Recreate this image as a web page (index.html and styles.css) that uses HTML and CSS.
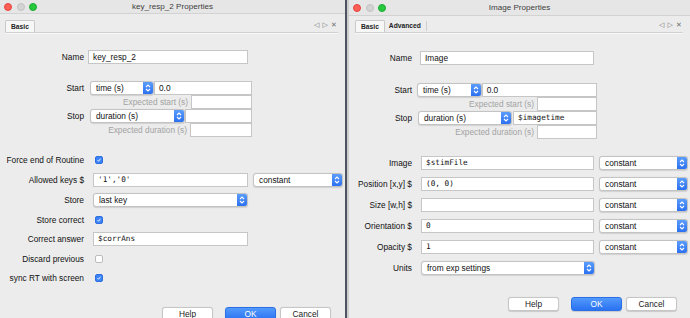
FILE: index.html
```html
<!DOCTYPE html>
<html lang="en">
<head>
  <meta charset="UTF-8">
  <title>Properties</title>
  <link rel="stylesheet" href="styles.css">
</head>
<body>
  <div class="desk">
    <!-- keyboard component dialog -->
    <section class="win win-left">
      <header class="titlebar">
        <span class="lights"><i class="dot red"></i><i class="dot off"></i><i class="dot green"></i></span>
        <span class="title">key_resp_2 Properties</span>
        <span></span>
      </header>
      <div class="tabs">
        <span class="tab active">Basic</span>
        <span class="tab-tools">◁ ▷ ✕</span>
      </div>
      <div class="body">
        <div class="row r-name">
          <label class="lbl">Name</label>
          <div class="field plain w-name">key_resp_2</div>
        </div>

        <div class="group g-time">
          <div class="row">
            <label class="lbl">Start</label>
            <div class="sel s-start"><span class="val">time (s)</span><span class="step"><svg width="10" height="12" viewBox="0 0 10 12"><polyline points="3,5 5,3 7,5"/><polyline points="3,7 5,9 7,7"/></svg></span></div>
            <div class="field plain w-startval">0.0</div>
          </div>
          <div class="row exp">
            <label class="lbl-exp">Expected start (s)</label>
            <div class="field w-exp1"></div>
          </div>
          <div class="row">
            <label class="lbl">Stop</label>
            <div class="sel s-stop"><span class="val">duration (s)</span><span class="step"><svg width="10" height="12" viewBox="0 0 10 12"><polyline points="3,5 5,3 7,5"/><polyline points="3,7 5,9 7,7"/></svg></span></div>
            <div class="field w-stopval"></div>
          </div>
          <div class="row exp">
            <label class="lbl-exp">Expected duration (s)</label>
            <div class="field w-exp2"></div>
          </div>
        </div>

        <div class="group g-opts">
          <div class="row">
            <label class="lbl">Force end of Routine</label>
            <span class="check on"><svg width="8" height="8" viewBox="0 0 8 8"><polyline points="2,4.2 3.4,5.7 6,2.3"/></svg></span>
          </div>
          <div class="row">
            <label class="lbl">Allowed keys $</label>
            <div class="field code w-wide">'1','0'</div>
            <div class="sel s-const"><span class="val">constant</span><span class="step"><svg width="10" height="12" viewBox="0 0 10 12"><polyline points="3,5 5,3 7,5"/><polyline points="3,7 5,9 7,7"/></svg></span></div>
          </div>
          <div class="row">
            <label class="lbl">Store</label>
            <div class="sel s-store"><span class="val">last key</span><span class="step"><svg width="10" height="12" viewBox="0 0 10 12"><polyline points="3,5 5,3 7,5"/><polyline points="3,7 5,9 7,7"/></svg></span></div>
          </div>
          <div class="row">
            <label class="lbl">Store correct</label>
            <span class="check on"><svg width="8" height="8" viewBox="0 0 8 8"><polyline points="2,4.2 3.4,5.7 6,2.3"/></svg></span>
          </div>
          <div class="row tight">
            <label class="lbl">Correct answer</label>
            <div class="field code w-wide">$corrAns</div>
          </div>
          <div class="row">
            <label class="lbl">Discard previous</label>
            <span class="check"></span>
          </div>
          <div class="row tight">
            <label class="lbl">sync RT with screen</label>
            <span class="check on"><svg width="8" height="8" viewBox="0 0 8 8"><polyline points="2,4.2 3.4,5.7 6,2.3"/></svg></span>
          </div>
        </div>

        <div class="buttons">
          <button class="btn">Help</button>
          <button class="btn ok">OK</button>
          <button class="btn">Cancel</button>
        </div>
      </div>
    </section>

    <div class="seam"></div>

    <!-- image component dialog -->
    <section class="win win-right">
      <header class="titlebar">
        <span class="lights"><i class="dot red"></i><i class="dot off"></i><i class="dot green"></i></span>
        <span class="title">Image Properties</span>
        <span></span>
      </header>
      <div class="tabs">
        <span class="tab active">Basic</span>
        <span class="tab">Advanced</span>
        <span class="tab-sep"></span>
        <span class="tab-tools">◁ ▷ ✕</span>
      </div>
      <div class="body">
        <div class="row r-name">
          <label class="lbl">Name</label>
          <div class="field plain w-name">Image</div>
        </div>

        <div class="group g-time">
          <div class="row">
            <label class="lbl">Start</label>
            <div class="sel s-start"><span class="val">time (s)</span><span class="step"><svg width="10" height="12" viewBox="0 0 10 12"><polyline points="3,5 5,3 7,5"/><polyline points="3,7 5,9 7,7"/></svg></span></div>
            <div class="field plain w-startval">0.0</div>
          </div>
          <div class="row exp">
            <label class="lbl-exp">Expected start (s)</label>
            <div class="field w-exp1"></div>
          </div>
          <div class="row">
            <label class="lbl">Stop</label>
            <div class="sel s-stop"><span class="val">duration (s)</span><span class="step"><svg width="10" height="12" viewBox="0 0 10 12"><polyline points="3,5 5,3 7,5"/><polyline points="3,7 5,9 7,7"/></svg></span></div>
            <div class="field code w-stopval">$imagetime</div>
          </div>
          <div class="row exp">
            <label class="lbl-exp">Expected duration (s)</label>
            <div class="field w-exp2"></div>
          </div>
        </div>

        <div class="group g-opts">
          <div class="row">
            <label class="lbl">Image</label>
            <div class="field code w-wide">$stimFile</div>
            <div class="sel s-const"><span class="val">constant</span><span class="step"><svg width="10" height="12" viewBox="0 0 10 12"><polyline points="3,5 5,3 7,5"/><polyline points="3,7 5,9 7,7"/></svg></span></div>
          </div>
          <div class="row">
            <label class="lbl">Position [x,y] $</label>
            <div class="field code w-wide">(0, 0)</div>
            <div class="sel s-const"><span class="val">constant</span><span class="step"><svg width="10" height="12" viewBox="0 0 10 12"><polyline points="3,5 5,3 7,5"/><polyline points="3,7 5,9 7,7"/></svg></span></div>
          </div>
          <div class="row">
            <label class="lbl">Size [w,h] $</label>
            <div class="field code w-wide"></div>
            <div class="sel s-const"><span class="val">constant</span><span class="step"><svg width="10" height="12" viewBox="0 0 10 12"><polyline points="3,5 5,3 7,5"/><polyline points="3,7 5,9 7,7"/></svg></span></div>
          </div>
          <div class="row">
            <label class="lbl">Orientation $</label>
            <div class="field code w-wide">0</div>
            <div class="sel s-const"><span class="val">constant</span><span class="step"><svg width="10" height="12" viewBox="0 0 10 12"><polyline points="3,5 5,3 7,5"/><polyline points="3,7 5,9 7,7"/></svg></span></div>
          </div>
          <div class="row">
            <label class="lbl">Opacity $</label>
            <div class="field code w-wide">1</div>
            <div class="sel s-const"><span class="val">constant</span><span class="step"><svg width="10" height="12" viewBox="0 0 10 12"><polyline points="3,5 5,3 7,5"/><polyline points="3,7 5,9 7,7"/></svg></span></div>
          </div>
          <div class="row">
            <label class="lbl">Units</label>
            <div class="sel s-store"><span class="val">from exp settings</span><span class="step"><svg width="10" height="12" viewBox="0 0 10 12"><polyline points="3,5 5,3 7,5"/><polyline points="3,7 5,9 7,7"/></svg></span></div>
          </div>
        </div>

        <div class="buttons">
          <button class="btn">Help</button>
          <button class="btn ok">OK</button>
          <button class="btn">Cancel</button>
        </div>
      </div>
    </section>
  </div>
</body>
</html>
```

FILE: styles.css
```css
* {
  margin: 0;
  padding: 0;
  box-sizing: border-box;
}

body {
  width: 690px;
  height: 318px;
  overflow: hidden;
  background: #ececec;
  font-family: "Liberation Sans", Arial, sans-serif;
  font-size: 8.3px;
  color: #111;
}

.desk {
  display: flex;
  height: 318px;
}

.win {
  flex: none;
  width: 345px;
  height: 318px;
  background: #ececec;
  overflow: hidden;
}

.seam {
  flex: none;
  width: 2px;
  background: #4d5361;
}

.win-right {
  width: 343px;
  border-left: 2px solid #cdcdcd;
}

/* title bar */
.titlebar {
  display: grid;
  grid-template-columns: 1fr auto 1fr;
  align-items: center;
  height: 14px;
  background: #e6e6e6;
  border-bottom: 1px solid #d2d2d2;
}

.win-right .titlebar {
  height: 16px;
}

.lights {
  display: flex;
  gap: 4.5px;
  padding-left: 4px;
}

.dot {
  width: 8px;
  height: 8px;
  border-radius: 50%;
}

.dot.red {
  background: #fd5e56;
  border: 0.5px solid #e2463f;
}

.dot.off {
  background: #d3d3d3;
  border: 0.5px solid #c2c2c2;
}

.dot.green {
  background: #27c93f;
  border: 0.5px solid #1daa2f;
}

.title {
  font-size: 8.1px;
  color: #404040;
}

/* tab strip */
.tabs {
  display: flex;
  align-items: flex-end;
  height: 19px;
  margin: 0 7px 0 5px;
  border-bottom: 1px solid #d0d0d0;
  box-shadow: 0 1px 0 #f8f8f8;
}

.win-right .tabs {
  height: 17px;
  margin-left: 6px;
}

.tab {
  height: 12px;
  padding: 0 4px;
  font-size: 6.7px;
  font-weight: bold;
  line-height: 12px;
  color: #222;
}

.tab.active {
  background: #f7f7f7;
  border: 1px solid #c9c9c9;
  border-bottom: none;
  border-radius: 2px 2px 0 0;
  padding: 0 5px;
  line-height: 11px;
}

.tab-sep {
  width: 1px;
  height: 10px;
  margin: 0 0 1px 1px;
  background: #cfcfcf;
}

.tab-tools {
  margin-left: auto;
  margin-right: 1px;
  padding-bottom: 3px;
  font-family: "DejaVu Sans", sans-serif;
  font-size: 7px;
  word-spacing: 1px;
  color: #6f6f6f;
}

/* form body */
.body {
  display: flex;
  flex-direction: column;
}

.row {
  display: flex;
  align-items: center;
  height: 14px;
  white-space: nowrap;
}

.lbl {
  flex: none;
  width: 84px;
  text-align: right;
}

.win-right .lbl {
  width: 63px;
}

.r-name {
  margin-top: 17px;
}

.win-right .r-name {
  margin-top: 18px;
}

.g-time {
  margin-top: 17px;
  width: 252px;
}

.win-right .g-time {
  margin-top: 18px;
  width: 248px;
}

.row.exp {
  justify-content: flex-end;
}

.lbl-exp {
  color: #a3a3a3;
  margin-right: 3px;
}

.g-opts {
  display: flex;
  flex-direction: column;
  gap: 6px;
  margin-top: 16px;
}

.win-left .row.tight {
  margin-top: -1px;
}

.win-right .g-opts {
  gap: 7px;
  margin-top: 17px;
}

/* text fields */
.field {
  height: 14px;
  background: #fff;
  border: 1px solid #c6c6c6;
  padding-left: 4px;
  line-height: 12px;
  font-family: "DejaVu Sans Mono", "Liberation Mono", monospace;
  font-size: 7.7px;
  color: #111;
}

.field.plain {
  font-family: "Liberation Sans", Arial, sans-serif;
  font-size: 8.3px;
}

.w-name {
  width: 160px;
  margin-left: 4px;
}

.win-right .w-name {
  width: 174px;
  margin-left: 8px;
}

.w-startval {
  width: 98px;
}

.win-right .w-startval {
  width: 116px;
}

.w-exp1 {
  width: 61px;
}

.w-exp2 {
  width: 62px;
}

.win-right .w-exp1,
.win-right .w-exp2 {
  width: 60px;
}

.w-stopval {
  width: 67px;
}

.win-right .w-stopval {
  width: 84px;
  margin-left: 1px;
}

.w-wide {
  width: 155px;
  margin-left: 9px;
}

.win-right .w-wide {
  width: 173px;
  margin-left: 9px;
}

/* pop-up menus */
.sel {
  display: flex;
  height: 14px;
  background: #fff;
  border: 1px solid #c3c3c3;
  border-radius: 3px;
  overflow: hidden;
  box-shadow: 0 0.5px 1px rgba(0, 0, 0, 0.12);
}

.sel .val {
  flex: 1;
  padding-left: 5px;
  line-height: 12px;
}

.step {
  flex: none;
  width: 10px;
  display: flex;
  align-items: center;
  justify-content: center;
  background: linear-gradient(#5b9dfb, #2b70f0);
}

.step polyline {
  fill: none;
  stroke: #fff;
  stroke-width: 1.1;
}

.s-start {
  width: 64px;
  margin-left: 6px;
}

.win-right .s-start {
  width: 65px;
  margin-left: 5px;
}

.s-stop {
  width: 95px;
  margin-left: 6px;
}

.win-right .s-stop {
  width: 94px;
}

.s-const {
  width: 90px;
  margin-left: 5px;
}

.win-right .s-const {
  width: 89px;
}

.s-store {
  width: 155px;
  margin-left: 9px;
}

.win-right .s-store {
  width: 174px;
}

/* checkboxes */
.check {
  display: flex;
  align-items: center;
  justify-content: center;
  width: 8px;
  height: 8px;
  margin-left: 11px;
  background: #fff;
  border: 1px solid #bdbdbd;
  border-radius: 2px;
}

.check.on {
  background: #3b83f7;
  border-color: #2f6fdf;
}

.check polyline {
  fill: none;
  stroke: #fff;
  stroke-width: 1.2;
}

/* dialog buttons */
.buttons {
  display: flex;
  margin-top: 22px;
  padding-left: 162px;
}

.win-right .buttons {
  margin-top: 22px;
  padding-left: 159px;
}

.btn {
  width: 51px;
  height: 14px;
  margin-right: 4px;
  background: #fff;
  border: 1px solid #c6c6c6;
  border-radius: 3px;
  box-shadow: 0 0.5px 1px rgba(0, 0, 0, 0.15);
  font-family: "Liberation Sans", Arial, sans-serif;
  font-size: 8.3px;
  color: #222;
}

.btn:first-child {
  margin-right: 12px;
}

.btn.ok {
  background: linear-gradient(#539afc, #2a72f1);
  border-color: #2a6fe6;
  color: #fff;
}
```
